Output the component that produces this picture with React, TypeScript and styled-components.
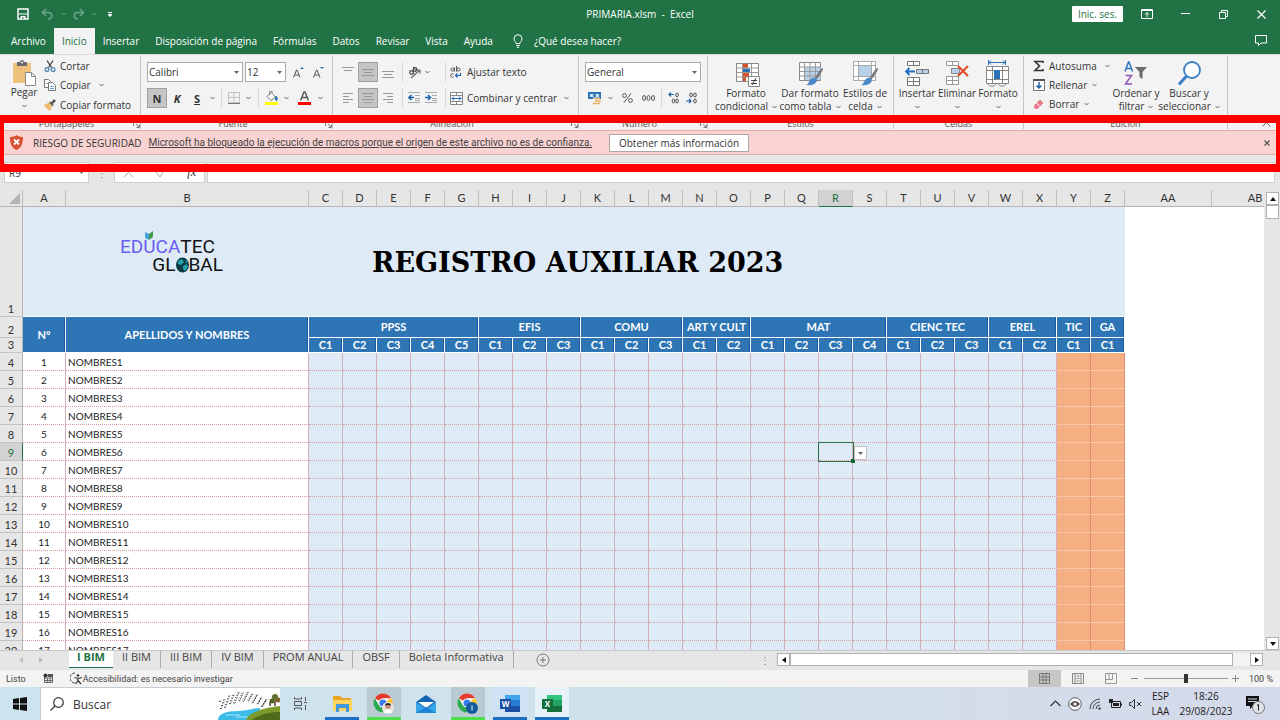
import React from "react";
import styled, { createGlobalStyle, css } from "styled-components";

const UI = `"Open Sans", "Noto Sans", sans-serif`;
const NARROW = `Roboto, "Open Sans", sans-serif`;
const CELL = `Lato, "Liberation Sans", sans-serif`;

const GlobalStyle = createGlobalStyle`
  * { box-sizing: border-box; }
  body { margin: 0; font-family: ${UI}; font-size: 10px; color: #333; }
  button, input, select { font: inherit; color: inherit; }
  button { border: 0; padding: 0; background: none; }
  svg { display: block; flex: none; }
`;

const Page = styled.div`
  display: flex;
  flex-direction: column;
  height: 100vh;
  min-height: 480px;
  overflow: hidden;
  background: #e6e6e6;
`;

/* ---------- title bar ---------- */
const TitleBar = styled.header`
  display: grid;
  grid-template-columns: 1fr auto 1fr;
  align-items: center;
  height: 28px;
  flex: none;
  background: #217346;
  color: #fff;
`;
const QuickAccess = styled.div`
  display: flex;
  align-items: center;
  padding-left: 14px;
`;
const WindowControls = styled.div`
  display: flex;
  justify-content: flex-end;
  align-items: center;
`;
const SignIn = styled.button`
  width: 51px;
  height: 16px;
  margin-right: 5px;
  background: #fff;
  color: #217346;
  border-radius: 1px;
`;
const ToolButton = styled.button<{ $w?: number; $on?: boolean }>`
  display: flex;
  align-items: center;
  justify-content: center;
  flex: none;
  width: ${(p) => p.$w ?? 20}px;
  height: 20px;
  ${(p) => p.$on && css`background: #c5c5c5; border: 1px solid #a0a0a0;`}
`;

/* ---------- ribbon tabs ---------- */
const RibbonTabs = styled.nav`
  display: flex;
  align-items: stretch;
  height: 26px;
  flex: none;
  padding: 0 8px 0 3px;
  background: #217346;
`;
const RibbonTab = styled.button<{ $active?: boolean }>`
  padding: 0 8px;
  color: ${(p) => (p.$active ? "#217346" : "#fff")};
  background: ${(p) => (p.$active ? "#f3f3f3" : "transparent")};
`;
const TellMe = styled.button`
  display: flex;
  align-items: center;
  gap: 11px;
  margin-left: 12px;
  color: #fff;
`;
const Comments = styled(ToolButton)`
  margin: 3px 0 0 auto;
`;

/* ---------- ribbon ---------- */
const Ribbon = styled.div`
  display: flex;
  height: 76px;
  flex: none;
  background: #f3f3f3;
  border-top: 1px solid #dcdcdc;
`;
const Group = styled.section<{ $w: number }>`
  display: flex;
  flex-direction: column;
  flex: none;
  width: ${(p) => p.$w}px;
  margin: 1px 0;
  border-right: 1px solid #c6c6c6;
`;
const GroupBody = styled.div<{ $pad?: number }>`
  display: flex;
  flex: 1;
  padding-left: ${(p) => p.$pad ?? 6}px;
`;
const GroupLabel = styled.div`
  display: flex;
  align-items: center;
  height: 10px;
  line-height: 10px;
  font-size: 9px;
  color: #555;
  span { flex: 1; text-align: center; }
`;
const Rows = styled.div`
  display: flex;
  flex-direction: column;
  gap: 6px;
  padding-top: 6px;
`;
const Row = styled.div`
  display: flex;
  align-items: center;
  height: 20px;
`;
const Cluster = styled.div`
  display: flex;
  width: 34px;
`;
const Sep = styled.i`
  width: 1px;
  height: 20px;
  margin: 0 4px;
  background: #d8d8d8;
`;
const Letter = styled.span<{ $italic?: boolean; $underline?: boolean }>`
  font-size: 11px;
  font-weight: 700;
  font-style: ${(p) => (p.$italic ? "italic" : "normal")};
  text-decoration: ${(p) => (p.$underline ? "underline" : "none")};
`;
const Stack = styled.div<{ $w?: number }>`
  display: flex;
  flex-direction: column;
  ${(p) => p.$w && `width: ${p.$w}px;`}
`;
const SmallButton = styled.button<{ $gap?: number }>`
  display: flex;
  align-items: center;
  gap: ${(p) => p.$gap ?? 4}px;
  height: 19px;
  white-space: nowrap;
`;
const BigButton = styled.button<{ $w: number }>`
  display: flex;
  flex-direction: column;
  align-items: center;
  justify-content: flex-start;
  width: ${(p) => p.$w}px;
  padding-top: 4px;
  line-height: 13px;
  white-space: nowrap;
`;
const LabelLine = styled.span`
  display: flex;
  align-items: center;
  justify-content: center;
  gap: 4px;
  min-height: 13px;
`;
const SelectBox = styled.label<{ $w: number }>`
  display: flex;
  align-items: center;
  width: ${(p) => p.$w}px;
  height: 20px;
  margin-right: 2px;
  padding-right: 3px;
  background: #fff;
  border: 1px solid #ababab;
  select {
    flex: 1;
    min-width: 0;
    padding: 0 1px;
    border: 0;
    background: none;
    appearance: none;
    outline: 0;
  }
`;
const Spacer = styled.div`
  flex: 1;
`;
const Collapse = styled.button`
  align-self: flex-end;
  margin: 0 9px 3px 0;
`;

/* ---------- security message ---------- */
const AlertWrap = styled.div`
  position: relative;
  flex: none;
`;
const Alert = styled.div`
  display: flex;
  align-items: center;
  height: 25px;
  padding: 0 7px 0 10px;
  background: #f8d3d2;
  border: solid #e8adab;
  border-width: 1px 0;
`;
const AlertTitle = styled.span`
  margin: 0 7px 0 10px;
`;
const AlertLink = styled.a`
  font-family: ${NARROW};
  color: #444;
  text-decoration: underline;
`;
const AlertButton = styled.button`
  width: 140px;
  height: 18px;
  margin-left: 17px;
  background: #fff;
  border: 1px solid #b0a6a6;
`;
const AlertClose = styled.button`
  margin-left: auto;
  padding: 3px;
`;
const Highlight = styled.div`
  position: absolute;
  inset: -15px 0 -17px;
  border: solid #f00;
  border-width: 8px 4px;
  pointer-events: none;
  z-index: 2;
`;

/* ---------- formula bar ---------- */
const FormulaBar = styled.div`
  display: flex;
  align-items: center;
  height: 35px;
  flex: none;
  padding: 0 5px 0 4px;
`;
const barBox = css`
  height: 21px;
  background: #fff;
  border: 1px solid #cfcfcf;
`;
const NameBox = styled.div`
  ${barBox}
  display: flex;
  align-items: center;
  width: 85px;
  padding-right: 4px;
  input { flex: 1; min-width: 0; padding: 0 4px; border: 0; background: none; }
`;
const FxBox = styled.div`
  ${barBox}
  display: flex;
  align-items: center;
  justify-content: space-between;
  width: 91px;
  margin-right: 2px;
  padding: 0 8px;
`;
const Fx = styled.span`
  font: italic 12px "Liberation Serif", serif;
`;
const Dots = styled.span`
  width: 25px;
  text-align: center;
  color: #888;
`;
const FormulaInput = styled.input`
  ${barBox}
  flex: 1;
  min-width: 0;
`;

/* ---------- sheet ---------- */
const SheetArea = styled.main`
  display: flex;
  flex: 1;
  min-height: 0;
`;
const GridView = styled.div`
  flex: 1;
  min-width: 0;
  overflow: hidden;
  background: linear-gradient(#e6e6e6 17px, #fff 17px);
`;
const Grid = styled.table`
  width: 100%;
  min-width: 1299px;
  table-layout: fixed;
  border-collapse: separate;
  border-spacing: 0;
  font-family: ${CELL};
  font-size: 10px;
  color: #222;
  th, td { padding: 0; overflow: hidden; white-space: nowrap; }
`;
const Col = styled.col<{ $w: number }>`
  width: ${(p) => p.$w}px;
`;
const ColHead = styled.th<{ $on?: boolean }>`
  height: 17px;
  font-weight: 400;
  font-size: 11px;
  line-height: 16px;
  background: ${(p) => (p.$on ? "#d2d2d2" : "#e6e6e6")};
  color: ${(p) => (p.$on ? "#217346" : "#333")};
  border-right: 1px solid #bdbdbd;
  border-bottom: 1px solid ${(p) => (p.$on ? "#217346" : "#b4b4b4")};
`;
const Corner = styled(ColHead)`
  svg { margin-left: 9px; }
`;
const RowHead = styled.th<{ $on?: boolean }>`
  font-weight: 400;
  font-size: 11px;
  line-height: 14px;
  vertical-align: bottom;
  background: ${(p) => (p.$on ? "#d2d2d2" : "#e6e6e6")};
  color: ${(p) => (p.$on ? "#217346" : "#333")};
  border-right: 1px solid ${(p) => (p.$on ? "#217346" : "#b4b4b4")};
  border-bottom: 1px solid #c4c4c4;
`;
const Banner = styled.td`
  height: 110px;
  background: #deeaf6;
  border-bottom: 1px solid #fff;
`;
const BannerContent = styled.div`
  display: flex;
  align-items: center;
  gap: 149px;
  padding-left: 97px;
`;
const SheetTitle = styled.h1`
  margin: 0;
  padding-top: 2px;
  font: 700 27px/30px "DejaVu Serif", serif;
  color: #000;
`;
const Logo = styled.div`
  position: relative;
  width: 103px;
  padding-top: 6px;
  margin-top: -18px;
  font: 19px/18px Roboto, "Liberation Sans", sans-serif;
  color: #111;
`;
const LogoLine = styled.div<{ $right?: boolean }>`
  display: flex;
  align-items: center;
  justify-content: ${(p) => (p.$right ? "flex-end" : "flex-start")};
  em { font-style: normal; color: #6a5cf0; }
`;
const LogoBook = styled.svg`
  position: absolute;
  left: 25px;
  top: -1px;
`;
const HeadCell = styled.th<{ $h: number }>`
  height: ${(p) => p.$h}px;
  font-size: 11px;
  line-height: 14px;
  font-weight: 700;
  color: #fff;
  background: #2e75b6;
  border-right: 1px solid #fff;
  border-bottom: 1px solid #fff;
  box-shadow: inset -1px 0 #1a5a9e;
`;
const Cell = styled.td<{ $tone?: "blue" | "orange" | "plain"; $center?: boolean }>`
  height: 18px;
  line-height: 16px;
  text-align: ${(p) => (p.$center ? "center" : "left")};
  background: ${(p) =>
    p.$tone === "blue" ? "#deeaf6" : p.$tone === "orange" ? "#f4b083" : "#fff"};
  border-right: 1px solid ${(p) => (p.$tone === "orange" ? "#dd8a68" : "#d3aebb")};
  border-bottom: 1px dotted ${(p) => (p.$tone === "orange" ? "#fbdcc8" : "#dc9aa0")};
`;
const NameCell = styled(Cell)`
  && { padding-left: 2px; }
`;
const Empty = styled.td`
  background: #fff;
`;
const ActiveCell = styled(Cell)`
  && { position: relative; overflow: visible; }
`;
const Cursor = styled.div`
  position: absolute;
  inset: -1px -2px -2px -1px;
  border: 1px solid #2f7049;
  &::after {
    content: "";
    position: absolute;
    right: -2px;
    bottom: -2px;
    width: 4px;
    height: 4px;
    background: #10662f;
  }
`;
const CellDrop = styled.button`
  position: absolute;
  left: 35px;
  top: 3px;
  width: 13px;
  height: 14px;
  display: flex;
  align-items: center;
  justify-content: center;
  background: #fff;
  border: 1px solid #c0c0c0;
  z-index: 1;
`;
const VScroll = styled.div`
  display: flex;
  flex-direction: column;
  justify-content: space-between;
  width: 16px;
  padding: 2px 2px 0;
`;
const ScrollBtn = styled.button`
  display: flex;
  align-items: center;
  justify-content: center;
  flex: none;
  width: 13px;
  height: 13px;
  background: #fff;
  border: 1px solid #b0b0b0;
`;
const VThumb = styled.div`
  height: 14px;
  width: 13px;
  background: #fff;
  border: 1px solid #b0b0b0;
`;

/* ---------- sheet tabs ---------- */
const SheetBar = styled.div`
  display: flex;
  height: 20px;
  flex: none;
  padding: 0 17px 2px 0;
  border-top: 1px solid #c8c8c8;
`;
const SheetNav = styled.div`
  display: flex;
  align-items: center;
  width: 69px;
  padding-left: 11px;
`;
const SheetTab = styled.button<{ $active?: boolean }>`
  height: 17px;
  padding: 0 ${(p) => (p.$active ? 8 : 9)}px 5px;
  font-size: 11px;
  line-height: 12px;
  color: #444;
  ${(p) =>
    p.$active
      ? css`color: #217346; font-weight: 700; background: #fff; border-bottom: 1px solid #217346;`
      : css`border-right: 1px solid #ababab;`}
`;
const AddSheet = styled.button`
  margin: 0 auto 0 22px;
`;
const HScroll = styled.div`
  display: flex;
  align-items: center;
  width: 41%;
  max-width: 511px;
`;
const HTrack = styled.div`
  flex: 1;
  height: 13px;
  padding-right: 17px;
  background: #f3f3f3;
`;
const HThumb = styled.div`
  height: 13px;
  background: #fff;
  border: 1px solid #b0b0b0;
`;

/* ---------- status bar ---------- */
const StatusBar = styled.footer`
  display: flex;
  align-items: center;
  height: 17px;
  flex: none;
  padding: 0 7px 0 6px;
  font-family: ${NARROW};
  font-size: 9px;
  background: #f3f3f3;
  color: #444;
`;
const StatusRight = styled.div`
  display: flex;
  align-items: center;
  margin-left: auto;
`;
const ViewButton = styled.button<{ $on?: boolean }>`
  display: flex;
  align-items: center;
  justify-content: center;
  width: 33px;
  height: 17px;
  background: ${(p) => (p.$on ? "#c6c6c6" : "transparent")};
`;
const ZoomSlider = styled.input`
  width: 84px;
  height: 10px;
  margin: 0 3px;
  appearance: none;
  background: linear-gradient(#999, #999) center / 100% 1px no-repeat;
  &::-webkit-slider-thumb {
    appearance: none;
    width: 4px;
    height: 9px;
    background: #333;
  }
`;
const ZoomLabel = styled.span`
  margin-left: 10px;
`;
const StatusIcon = styled.span`
  margin: 0 16px 0 17px;
`;

/* ---------- taskbar ---------- */
const Taskbar = styled.div`
  display: flex;
  height: 33px;
  flex: none;
  background: linear-gradient(90deg, #cde4ef, #cfe2ea 55%, #d4dcea 80%, #d3d9ea);
  color: #222;
`;
const StartButton = styled.button`
  display: flex;
  align-items: center;
  justify-content: center;
  width: 40px;
`;
const Search = styled.label`
  display: flex;
  align-items: center;
  width: 240px;
  padding-left: 9px;
  background: #fff;
  border: 1px solid #c5cdd2;
  border-width: 1px 0 0 1px;
  input {
    flex: 1;
    min-width: 0;
    padding: 0;
    margin-left: 9px;
    border: 0;
    background: none;
    font-size: 12px;
    outline: 0;
  }
  input::placeholder { color: #333; opacity: 1; }
`;
const TaskView = styled.button`
  display: flex;
  align-items: center;
  justify-content: center;
  width: 40px;
  margin-right: 5px;
`;
const TaskButton = styled.button<{ $tone?: string; $line?: string }>`
  display: flex;
  align-items: center;
  justify-content: center;
  width: 34px;
  margin-right: 8px;
  padding-top: 3px;
  background: ${(p) => p.$tone ?? "transparent"};
  border-bottom: 3px solid ${(p) => p.$line ?? "transparent"};
`;
const Tray = styled.div`
  display: flex;
  align-items: center;
  margin-left: auto;
  padding-right: 15px;
`;
const TrayButton = styled.button`
  display: flex;
  align-items: center;
  justify-content: center;
  width: 20px;
`;
const NotifyButton = styled(TrayButton)`
  margin-left: 9px;
`;
const TrayText = styled.div<{ $w: number }>`
  width: ${(p) => p.$w}px;
  line-height: 15px;
  text-align: center;
`;

/* ---------- drawings ---------- */
const Svg = ({ w, h = w, children }: { w: number; h?: number; children: React.ReactNode }) => (
  <svg width={w} height={h} viewBox={`0 0 ${w} ${h}`} fill="none" aria-hidden="true">
    {children}
  </svg>
);
const Chevron = ({ color = "#666" }) => (
  <Svg w={5} h={4}><path d="M.5 1l2 2 2-2" stroke={color} /></Svg>
);
const Tri = ({ dir = "down", color = "#555" }: { dir?: "up" | "down" | "left" | "right"; color?: string }) => {
  const d = { down: "M1 2h6L4 6z", up: "M1 6h6L4 2z", left: "M6 1v6L2 4z", right: "M2 1v6l4-3z" }[dir];
  return <Svg w={8}><path d={d} fill={color} /></Svg>;
};
const SmallTri = () => <Svg w={5} h={3}><path d="M0 0h5L2.500 3z" fill="#666" /></Svg>;
const Launcher = () => (
  <Svg w={7}><path d="M.5 5V.5H5M3 3l3 3M6.500 3.500v3h-3" stroke="#777" /></Svg>
);

const SaveIcon = () => (
  <Svg w={12}><path d="M1 1h10v10H1z" stroke="#fff" strokeWidth="1.500" /><path d="M2 5.500h8v1H2zM3.500 8h5v3h-5z" fill="#fff" /><path d="M5 9.500h1.500V11H5z" fill="#217346" /></Svg>
);
const UndoIcon = ({ flip = false }) => (
  <Svg w={13} h={12}><path transform={flip ? "translate(13 0) scale(-1 1)" : undefined} d="M5 1L1.500 4.500 5 8M1.500 4.500H8a3.300 3.300 0 0 1 0 6.500H7" stroke="#6aa386" strokeWidth="1.600" /></Svg>
);
const PasteIcon = () => (
  <Svg w={24} h={26}>
    <path d="M1 3h18v20H1z" fill="#eec27a" /><path d="M5 2h3a2 2 0 0 1 4 0h3v4H5z" fill="#6b6b6b" /><circle cx="10" cy="2.500" r="1" fill="#f3f3f3" />
    <path d="M13.500 12.500h6l4 4v9h-10z" fill="#fff" stroke="#888" /><path d="M19.500 12.500v4h4" stroke="#888" />
  </Svg>
);
const CutIcon = () => (
  <Svg w={12}><path d="M3 .5l4.500 7M9 .5L4.500 7.500" stroke="#444" strokeWidth="1.300" /><circle cx="3" cy="9.500" r="1.900" stroke="#4a7fb5" strokeWidth="1.200" /><circle cx="9" cy="9.500" r="1.900" stroke="#4a7fb5" strokeWidth="1.200" /></Svg>
);
const CopyIcon = () => (
  <Svg w={12}><path d="M.5.5h4l2 2v6h-6z" fill="#fff" stroke="#777" /><path d="M4.500 3.500h4l3 3v5h-7z" fill="#fff" stroke="#777" /><path d="M6 7.500h4M6 9.500h4M2 4.500h2" stroke="#6f9fcf" /></Svg>
);
const BrushIcon = () => (
  <Svg w={12}><path d="M0 6l5-2.500L8.500 7 6 12C3.500 11 1 8.500 0 6z" fill="#eebf73" /><path d="M5 3.500L8.500 7l1.200-1-1-1L12 2 10 0 7 3.500l-1-1z" fill="#555" /></Svg>
);
const BordersIcon = () => (
  <Svg w={12}><path d="M.5.5h11v10H.5zM6 .5v10M.5 5.500h11" stroke="#999" strokeDasharray="1 1" /><path d="M0 11.500h12" stroke="#777" /></Svg>
);
const BucketIcon = () => (
  <Svg w={13} h={14}><path d="M6 1.500L10.500 6 6 9.500 2 5.500z" fill="#fff" stroke="#777" /><path d="M4.500 4V1.500a1.500 1.500 0 0 1 3 0" stroke="#777" /><path d="M11 5c1.500 2 1.500 4 .5 4.500-1 0-1.500-1-.5-4.500z" fill="#2b6cb0" stroke="#2b6cb0" /><path d="M0 11h13v3H0z" fill="#ff0" /></Svg>
);
const FontColorIcon = () => (
  <Svg w={13} h={14}><path d="M2.500 9.500L6 1h1l3.500 8.500M4 6.500h5" stroke="#555" strokeWidth="1.400" /><path d="M0 11h13v3H0z" fill="#f00" /></Svg>
);
const GrowIcon = ({ down = false }) => (
  <Svg w={12} h={13}><path d="M1.500 11.500L4.500 4h.5l3 7.500M2.800 9h4" stroke="#555" /><path d={down ? "M8 1h4L10 3z" : "M8 3h4L10 1z"} fill="#2b6cb0" /></Svg>
);
const LinesIcon = ({ kind }: { kind: "top" | "middle" | "bottom" | "left" | "center" | "right" }) => {
  const d = {
    top: "M0 1.500h12M2 4.500h8",
    middle: "M0 3.500h12M2 6.500h8M0 9.500h12",
    bottom: "M0 5.500h12M2 8.500h8M0 11.500h12",
    left: "M1 1.500h10M1 4.500h6M1 7.500h10M1 10.500h6",
    center: "M0 1.500h12M2 4.500h8M0 7.500h12M2 10.500h8",
    right: "M1 1.500h10M5 4.500h6M1 7.500h10M5 10.500h6",
  }[kind];
  return <Svg w={12}><path d={d} stroke="#999" /></Svg>;
};
const OrientIcon = () => (
  <Svg w={13}><path d="M3 12L12 4M12 4v3.500M12 4H8.500" stroke="#666" strokeWidth="1.200" /><circle cx="3.500" cy="6.500" r="1.800" stroke="#444" strokeWidth="1.200" /><circle cx="7" cy="3.500" r="1.800" stroke="#444" strokeWidth="1.200" /><path d="M5 5l1 3M5 1l3.500 4" stroke="#444" /></Svg>
);
const IndentIcon = ({ right = false }) => (
  <Svg w={12}><path d="M0 .5h12M7 3.500h5M7 6.500h5M0 10.500h12M7 8.500h5" stroke="#aaa" /><path d={right ? "M0 5.500h5M3 3l2.500 2.500L3 8" : "M6 5.500H1M3.500 3L1 5.500 3.500 8"} stroke="#1f62ad" strokeWidth="1.600" /></Svg>
);
const WrapIcon = () => (
  <Svg w={12}><circle cx="2.500" cy="3.500" r="1.600" stroke="#555" /><path d="M4.500 1.500v4M6.500 0v5.500M3.500 8a1.800 1.800 0 1 0 0 3" stroke="#555" /><circle cx="8.500" cy="3.500" r="1.600" stroke="#555" /><path d="M10.500 7v2.500h-5M7.500 7.500L5.500 9.500l2 2" stroke="#1f62ad" strokeWidth="1.200" /></Svg>
);
const MergeIcon = () => (
  <Svg w={14} h={13}><path d="M.5.500h12v12H.5zM.5 3.500h12M.5 9.500h12M6.500.5v3M6.500 9.500v3" fill="#fff" stroke="#888" /><path d="M2 6.500h9M4 4.500l-2 2 2 2M9 4.500l2 2-2 2" stroke="#1f62ad" /></Svg>
);
const CurrencyIcon = () => (
  <Svg w={14} h={13}><path d="M0 0h13v7H0z" fill="#2a72b8" /><path d="M2 2h9v3H2z" fill="#cfe2f5" /><circle cx="6.500" cy="3.500" r="1.500" fill="#2a72b8" /><path d="M5 5.500h7v7H5z" fill="#f3f3f3" /><path d="M6 6.500h6M7 9h6M5 11.500h7" stroke="#e8b060" strokeWidth="1.500" /></Svg>
);
const PercentIcon = () => (
  <Svg w={11} h={10}><circle cx="2.500" cy="2.500" r="1.900" stroke="#555" /><circle cx="8.500" cy="7.500" r="1.900" stroke="#555" /><path d="M9 .5L2 9.500" stroke="#555" /></Svg>
);
const ThousandsIcon = () => (
  <Svg w={13} h={8}>{[2, 6.5, 11].map((x) => <ellipse key={x} cx={x} cy="4" rx="1.500" ry="2.500" stroke="#555" />)}</Svg>
);
const DecimalIcon = ({ less = false }) => (
  <Svg w={12}><ellipse cx="9" cy="3" rx="1.300" ry="2" stroke="#555" /><ellipse cx={less ? 5 : 9} cy={less ? 3 : 9} rx="1.300" ry="2" stroke="#555" /><ellipse cx={less ? 9 : 5.500} cy="9" rx="1.300" ry="2" stroke="#555" /><path d={less ? "M0 9h5M3 7l2 2-2 2" : "M6 2.500H1M3 .5l-2 2 2 2"} stroke="#1f62ad" strokeWidth="1.200" /></Svg>
);
const CondFormatIcon = () => (
  <Svg w={27}>
    <path d="M3.500 3.500h22v18h-22z" fill="#fff" stroke="#888" /><path d="M10 4h5v4h-5zM10 13h6v4h-6zM10 17h3v4h-3z" fill="#d9532c" /><path d="M10 8.500h7v4h-7z" fill="#2a72b8" />
    <path d="M3.500 8h22M3.500 12.500h22M3.500 17h22M9.500 3.500v18M18.500 3.500v18" stroke="#999" />
    <path d="M15.500 16.500h11v10h-11z" fill="#fff" stroke="#888" /><path d="M18 20.500h6M18 23.500h6M23 18l-4 7" stroke="#444" />
  </Svg>
);
const Brush = () => (
  <g><path d="M25.500 8c1 1 .5 2-5.500 11l-2-1.500C22 11 24.500 7.500 25.500 8z" fill="#777" /><path d="M18.500 18c2 1 2 3 0 5-2 2-6 2.500-9 2 2-1 2-3 3.500-5 1.500-2 4-3 5.500-2z" fill="#4b8ac9" /></g>
);
const TableFormatIcon = () => (
  <Svg w={27}><path d="M2.500 2.500h21v18h-21z" fill="#fff" stroke="#888" /><path d="M8 7h15.500v13H8z" fill="#b9d0ea" /><path d="M2.500 7h21M2.500 11.500h21M2.500 16h21M7.500 2.500v18M13 2.500v18M18.500 2.500v18" stroke="#999" /><Brush /></Svg>
);
const CellStyleIcon = () => (
  <Svg w={27}><path d="M1.500 1.500h22v19h-22zM1.500 5.500h22M1.500 16.500h22M6.500 1.500v19M19.500 1.500v19" fill="#fff" stroke="#aaa" /><path d="M7 6h12v10H7z" fill="#b9d0ea" /><Brush /></Svg>
);
const InsertIcon = () => (
  <Svg w={26} h={27}><path d="M3.500 1.500h12v4h-12zM9.500 1.500v4M3.500 17.500h12v8h-12zM3.500 21.500h12M9.500 17.500v8" fill="#fff" stroke="#777" /><path d="M12.500 9.500h12v4h-12z" fill="#b9d0ea" stroke="#777" /><path d="M18.500 9.500v4" stroke="#777" /><path d="M11 11.500H2M5.500 8L2 11.500 5.500 15" stroke="#1f6fbf" strokeWidth="1.800" /></Svg>
);
const DeleteIcon = () => (
  <Svg w={26} h={27}><path d="M2.500 1.500h12v4h-12zM8.500 1.500v4M2.500 16.500h12v8h-12zM2.500 20.500h12M8.500 16.500v8" fill="#fff" stroke="#999" /><path d="M7.500 8.500h8v5h-8z" fill="#b9d0ea" stroke="#888" /><path d="M14 6l10 10M24 6L14 16" stroke="#dc4b23" strokeWidth="2" /></Svg>
);
const FormatIcon = () => (
  <Svg w={26} h={27}><path d="M3 2.500h18M3.500 0v5M20.500 0v5M6 .5l-2 2 2 2M18 .5l2 2-2 2" stroke="#2a72b8" /><path d="M1.500 6.500h22v17h-22zM1.500 10.500h22M1.500 19.500h22M7.500 6.500v17M17.500 6.500v17" fill="#fff" stroke="#888" /><path d="M9 10h6v9H9z" fill="#2a72b8" /><path d="M3 24c2 3 6 3 8 0M13 24c2 3 6 3 8 0" stroke="#888" /></Svg>
);
const SigmaIcon = () => <Svg w={12}><path d="M10 3V1.500H2L6.500 6 2 10.500h8V9" stroke="#333" strokeWidth="1.600" /></Svg>;
const FillIcon = () => <Svg w={12}><path d="M.5.500h11v11H.5z" fill="#fff" stroke="#777" /><path d="M0 1h12" stroke="#555" strokeWidth="2" /><path d="M6 3v6M3.500 6.500L6 9l2.500-2.500" stroke="#1f62ad" strokeWidth="1.500" /></Svg>;
const EraserIcon = () => <Svg w={12}><path d="M1 7.500L7 1.500 10.500 5l-6 6H2.500L1 9.500z" fill="#e8798c" /><path d="M3.500 5l3.500 3.500" stroke="#fff" /></Svg>;
const SortIcon = () => (
  <Svg w={24} h={27}><path d="M1 11.500L4.500 2h.5L8.500 11.500M2.200 8.500h5" stroke="#2f75bd" strokeWidth="1.500" /><path d="M1.500 15.500h6l-6 8.500h6.500" stroke="#8e55b8" strokeWidth="1.500" /><path d="M11 7h12l-4.500 5v7l-3-2v-5z" fill="#6b6b6b" /></Svg>
);
const FindIcon = () => (
  <Svg w={25} h={27}><circle cx="15" cy="10" r="8" fill="#fff" stroke="#3c7fc4" strokeWidth="1.800" /><path d="M9.500 16L2 24.500" stroke="#3c7fc4" strokeWidth="3" /></Svg>
);
const ChromeIcon = ({ badge }: { badge: React.ReactNode }) => (
  <Svg w={22}>
    <circle cx="10" cy="10" r="9.500" fill="#fff" />
    <path d="M10 10L1.800 5.200A9.500 9.500 0 0 1 18.200 5.200H10z" fill="#e33b2e" />
    <path d="M10 10l8.200-4.800A9.500 9.500 0 0 1 10 19.500l4-7z" fill="#fcc31e" />
    <path d="M10 19.500A9.500 9.500 0 0 1 1.800 5.200L6 12.300l4 2.500z" fill="#2da94f" />
    <circle cx="10" cy="10" r="4.600" fill="#fff" /><circle cx="10" cy="10" r="3.600" fill="#3b7ded" />
    {badge}
  </Svg>
);
const AppDoc = ({ letter, dark, mid, light }: { letter: string; dark: string; mid: string; light: string }) => (
  <Svg w={20} h={19}>
    <path d="M5 1h15v5H5z" fill={light} /><path d="M5 6h15v6H5z" fill={mid} /><path d="M5 12h15v6H5z" fill={dark} />
    <path d="M0 5h11v10H0z" fill={dark} />
    <text x="5.500" y="13" textAnchor="middle" fontSize="8" fontWeight="700" fontFamily="Open Sans, sans-serif" fill="#fff">{letter}</text>
  </Svg>
);
const birds = Array.from({ length: 46 }, (_, i) => {
  const t = i / 45;
  return [1 + t * 46, 13 - Math.sin(t * 3) * 9 + ((i * 7) % 9) * 1.1];
});
const Scenery = () => (
  <Svg w={62} h={32}>
    {birds.map(([x, y], i) => <path key={i} d={`M${x.toFixed(1)} ${y.toFixed(1)}l1 .8 1-1.200`} stroke="#222" strokeWidth="0.900" />)}
    <path d="M0 32c0-6 8-9 20-9 10 0 16-3 22-3v12z" fill="#3cbbe8" /><path d="M8 27h14M18 29h14" stroke="#a9e6f7" />
    <path d="M28 32c2-5 6-7 12-9 6-3 14-4 22-5v14z" fill="#7d9b2c" /><path d="M34 32c6-5 16-8 28-8v8z" fill="#4d6b1b" />
    <path d="M57 18V9M52 18v-4" stroke="#5a3b1c" strokeWidth="1.500" /><circle cx="57" cy="9" r="3" fill="#5f7030" /><circle cx="60" cy="12" r="2.500" fill="#7c6234" /><circle cx="54" cy="13" r="2.500" fill="#4c6420" />
  </Svg>
);

type IconType = React.FC;
const Big = ({ w, icon: I, lines }: { w: number; icon: IconType; lines: [string, string] }) => (
  <BigButton $w={w}>
    <I />
    <LabelLine>{lines[0]}</LabelLine>
    <LabelLine>{lines[1]}<Chevron /></LabelLine>
  </BigButton>
);
const Drop = ({ w = 10 }) => <ToolButton $w={w} aria-label="Más opciones"><Chevron /></ToolButton>;
const GroupFooter = ({ text, launcher }: { text: string; launcher?: boolean }) => (
  <GroupLabel><span>{text}</span>{launcher && <Launcher />}</GroupLabel>
);

/* ---------- data ---------- */
const tabsAfter = ["Insertar", "Disposición de página", "Fórmulas", "Datos", "Revisar", "Vista", "Ayuda"];
const letters = "CDEFGHIJKLMNOPQRSTUVWXYZ".split("");
const subjects: [string, number][] = [
  ["PPSS", 5], ["EFIS", 3], ["COMU", 3], ["ART Y CULT", 2], ["MAT", 4],
  ["CIENC TEC", 3], ["EREL", 2], ["TIC", 1], ["GA", 1],
];
const criteria = subjects.flatMap(([, n]) => Array.from({ length: n }, (_, i) => `C${i + 1}`));
const students = Array.from({ length: 17 }, (_, i) => i + 1);
const sheets = ["II BIM", "III BIM", "IV BIM", "PROM ANUAL", "OBSF", "Boleta Informativa"];

export default function App() {
  return (
    <Page>
      <GlobalStyle />
      <TitleBar>
        <QuickAccess>
          <ToolButton $w={18} aria-label="Guardar"><SaveIcon /></ToolButton>
          <ToolButton $w={30} aria-label="Deshacer"><UndoIcon /></ToolButton>
          <ToolButton $w={2} aria-label="Opciones de deshacer"><Chevron color="#6aa386" /></ToolButton>
          <ToolButton $w={28} aria-label="Rehacer"><UndoIcon flip /></ToolButton>
          <ToolButton $w={4} aria-label="Opciones de rehacer"><Chevron color="#6aa386" /></ToolButton>
          <ToolButton $w={28} aria-label="Personalizar">
            <Svg w={4} h={5}><path d="M0 .5h4" stroke="#fff" /><path d="M0 2h4v1L2 5 0 3z" fill="#fff" /></Svg>
          </ToolButton>
        </QuickAccess>
        <span>PRIMARIA.xlsm&nbsp; - &nbsp;Excel</span>
        <WindowControls>
          <SignIn>Inic. ses.</SignIn>
          <ToolButton $w={38} aria-label="Opciones de la cinta"><Svg w={12} h={10}><path d="M.5.500h11v9H.5z" stroke="#fff" /><path d="M0 1.500h12M6 8V4M4 5.500l2-2 2 2" stroke="#fff" /></Svg></ToolButton>
          <ToolButton $w={38} aria-label="Minimizar"><Svg w={9} h={2}><path d="M0 .5h9" stroke="#fff" /></Svg></ToolButton>
          <ToolButton $w={38} aria-label="Restaurar"><Svg w={9}><path d="M.5 2.500h6v6h-6zM2.500 2.500v-2h6v6h-2" stroke="#fff" /></Svg></ToolButton>
          <ToolButton $w={38} aria-label="Cerrar"><Svg w={9}><path d="M.5.500l8 8M8.500.500l-8 8" stroke="#fff" strokeWidth="1.200" /></Svg></ToolButton>
        </WindowControls>
      </TitleBar>

      <RibbonTabs>
        <RibbonTab>Archivo</RibbonTab>
        <RibbonTab $active>Inicio</RibbonTab>
        {tabsAfter.map((t) => <RibbonTab key={t}>{t}</RibbonTab>)}
        <TellMe>
          <Svg w={10} h={14}><path d="M3 9.500C3 8 1 7 1 4.700a4 4 0 0 1 8 0C9 7 7 8 7 9.500zM3.200 11.500h3.600M3.800 13.300h2.400" stroke="#fff" /></Svg>
          ¿Qué desea hacer?
        </TellMe>
        <Comments $w={22} aria-label="Comentarios"><Svg w={12}><path d="M.5.500h11v7.500H6L3.500 10.500V8h-3z" stroke="#fff" /></Svg></Comments>
      </RibbonTabs>

      <Ribbon>
        <Group $w={141}>
          <GroupBody $pad={4}>
            <BigButton $w={40}><PasteIcon /><LabelLine>Pegar</LabelLine><LabelLine><Chevron /></LabelLine></BigButton>
            <Stack>
              <SmallButton><CutIcon />Cortar</SmallButton>
              <Row as="div"><SmallButton><CopyIcon />Copiar</SmallButton><Drop w={22} /></Row>
              <SmallButton><BrushIcon />Copiar formato</SmallButton>
            </Stack>
          </GroupBody>
          <GroupFooter text="Portapapeles" launcher />
        </Group>

        <Group $w={192}>
          <GroupBody>
            <Rows>
              <Row>
                <SelectBox $w={96}><select aria-label="Fuente"><option>Calibri</option></select><SmallTri /></SelectBox>
                <SelectBox $w={41}><select aria-label="Tamaño"><option>12</option></select><SmallTri /></SelectBox>
                <ToolButton aria-label="Aumentar fuente"><GrowIcon /></ToolButton>
                <ToolButton aria-label="Disminuir fuente"><GrowIcon down /></ToolButton>
              </Row>
              <Row>
                <ToolButton $on><Letter>N</Letter></ToolButton>
                <ToolButton><Letter $italic>K</Letter></ToolButton>
                <ToolButton><Letter $underline>S</Letter></ToolButton>
                <Drop /><Sep />
                <ToolButton $w={16} aria-label="Bordes"><BordersIcon /></ToolButton><Drop w={12} /><Sep />
                <ToolButton $w={16} aria-label="Relleno"><BucketIcon /></ToolButton><Drop w={14} />
                <ToolButton $w={22} aria-label="Color de fuente"><FontColorIcon /></ToolButton><Drop />
              </Row>
            </Rows>
          </GroupBody>
          <GroupFooter text="Fuente" launcher />
        </Group>

        <Group $w={246}>
          <GroupBody $pad={5}>
            <Rows>
              <Row>
                <ToolButton aria-label="Arriba"><LinesIcon kind="top" /></ToolButton>
                <ToolButton $on aria-label="Medio"><LinesIcon kind="middle" /></ToolButton>
                <ToolButton aria-label="Abajo"><LinesIcon kind="bottom" /></ToolButton>
                <Sep />
                <Cluster><ToolButton $w={14} aria-label="Orientación"><OrientIcon /></ToolButton><Drop w={12} /></Cluster>
                <Sep />
                <SmallButton $gap={5}><WrapIcon />Ajustar texto</SmallButton>
              </Row>
              <Row>
                <ToolButton aria-label="Izquierda"><LinesIcon kind="left" /></ToolButton>
                <ToolButton $on aria-label="Centro"><LinesIcon kind="center" /></ToolButton>
                <ToolButton aria-label="Derecha"><LinesIcon kind="right" /></ToolButton>
                <Sep />
                <Cluster><ToolButton $w={14} aria-label="Disminuir sangría"><IndentIcon /></ToolButton><ToolButton aria-label="Aumentar sangría"><IndentIcon right /></ToolButton></Cluster>
                <Sep />
                <SmallButton $gap={3}><MergeIcon />Combinar y centrar</SmallButton><Drop w={18} />
              </Row>
            </Rows>
          </GroupBody>
          <GroupFooter text="Alineación" launcher />
        </Group>

        <Group $w={129}>
          <GroupBody>
            <Rows>
              <Row><SelectBox $w={116}><select aria-label="Formato de número"><option>General</option></select><SmallTri /></SelectBox></Row>
              <Row>
                <ToolButton aria-label="Moneda"><CurrencyIcon /></ToolButton><Drop />
                <ToolButton $w={24} aria-label="Porcentaje"><PercentIcon /></ToolButton>
                <ToolButton $w={18} aria-label="Millares"><ThousandsIcon /></ToolButton><Sep />
                <ToolButton $w={16} aria-label="Más decimales"><DecimalIcon /></ToolButton>
                <ToolButton aria-label="Menos decimales"><DecimalIcon less /></ToolButton>
              </Row>
            </Rows>
          </GroupBody>
          <GroupFooter text="Número" launcher />
        </Group>

        <Group $w={186}>
          <GroupBody>
            <Big w={64} icon={CondFormatIcon} lines={["Formato", "condicional"]} />
            <Big w={64} icon={TableFormatIcon} lines={["Dar formato", "como tabla"]} />
            <Big w={46} icon={CellStyleIcon} lines={["Estilos de", "celda"]} />
          </GroupBody>
          <GroupFooter text="Estilos" />
        </Group>

        <Group $w={130}>
          <GroupBody $pad={3}>
            <Big w={40} icon={InsertIcon} lines={["Insertar", ""]} />
            <Big w={40} icon={DeleteIcon} lines={["Eliminar", ""]} />
            <Big w={42} icon={FormatIcon} lines={["Formato", ""]} />
          </GroupBody>
          <GroupFooter text="Celdas" />
        </Group>

        <Group $w={204}>
          <GroupBody $pad={9}>
            <Stack $w={79}>
              <SmallButton><SigmaIcon />Autosuma<Drop w={14} /></SmallButton>
              <SmallButton><FillIcon />Rellenar<Drop w={6} /></SmallButton>
              <SmallButton><EraserIcon />Borrar<Drop w={6} /></SmallButton>
            </Stack>
            <Big w={48} icon={SortIcon} lines={["Ordenar y", "filtrar"]} />
            <Big w={58} icon={FindIcon} lines={["Buscar y", "seleccionar"]} />
          </GroupBody>
          <GroupFooter text="Edición" />
        </Group>
        <Spacer />
        <Collapse aria-label="Contraer la cinta"><Svg w={9} h={5}><path d="M.5 4.500l4-4 4 4" stroke="#666" /></Svg></Collapse>
      </Ribbon>

      <AlertWrap>
        <Alert role="alert">
          <Svg w={13} h={15}><path d="M6.500 0C8 1.500 10.500 2 13 2c0 7-2 11-6.500 13C2 13 0 9 0 2c2.500 0 5-.5 6.500-2z" fill="#d8502d" /><path d="M4 4.500l5 5M9 4.500l-5 5" stroke="#fff" strokeWidth="1.800" /></Svg>
          <AlertTitle>RIESGO DE SEGURIDAD</AlertTitle>
          <AlertLink href="#macros">Microsoft ha bloqueado la ejecución de macros porque el origen de este archivo no es de confianza.</AlertLink>
          <AlertButton>Obtener más información</AlertButton>
          <AlertClose aria-label="Cerrar aviso"><Svg w={6}><path d="M.5.500l5 5M5.500.500l-5 5" stroke="#555" strokeWidth="1.200" /></Svg></AlertClose>
        </Alert>
        <Highlight />
      </AlertWrap>

      <FormulaBar>
        <NameBox><input aria-label="Cuadro de nombres" defaultValue="R9" /><SmallTri /></NameBox>
        <Dots>⋮</Dots>
        <FxBox>
          <Svg w={11}><path d="M1 1l9 9M10 1l-9 9" stroke="#aaa" /></Svg>
          <Svg w={11}><path d="M1 5l4 5 5-9" stroke="#aaa" /></Svg>
          <Fx>fx</Fx>
        </FxBox>
        <FormulaInput aria-label="Fórmula" />
      </FormulaBar>

      <SheetArea>
        <GridView>
          <Grid>
            <colgroup>
              <Col $w={23} /><Col $w={43} /><Col $w={243} />
              {letters.map((l) => <Col key={l} $w={34} />)}
              <Col $w={87} /><col />
            </colgroup>
            <thead>
              <tr>
                <Corner aria-label="Seleccionar todo"><Svg w={11}><path d="M11 0v11H0z" fill="#b4b4b4" /></Svg></Corner>
                {["A", "B", ...letters, "AA", "AB"].map((l) => <ColHead key={l} $on={l === "R"}>{l}</ColHead>)}
              </tr>
            </thead>
            <tbody>
              <tr>
                <RowHead>1</RowHead>
                <Banner colSpan={26}>
                  <BannerContent>
                    <Logo>
                      <LogoLine><em>EDUCA</em>TEC</LogoLine>
                      <LogoLine $right>
                        GL
                        <Svg w={13} h={16}><ellipse cx="6.500" cy="8" rx="6.500" ry="7.500" fill="#0b3a45" /><path d="M2 4l4-2 2 3-3 3-3-1zM7 9l4-2 1 3-3 4-2-2zM9 3l3 2-2 1z" fill="#23a3ae" /></Svg>
                        BAL
                      </LogoLine>
                      <LogoBook width="9" height="9" viewBox="0 0 9 9" aria-hidden="true"><path d="M0 1l4 2v6L0 7z" fill="#45a3dc" /><path d="M4 3l4-3v6L4 9z" fill="#3f9a4a" /></LogoBook>
                    </Logo>
                    <SheetTitle>REGISTRO AUXILIAR 2023</SheetTitle>
                  </BannerContent>
                </Banner>
                <Empty colSpan={2} />
              </tr>
              <tr>
                <RowHead>2</RowHead>
                <HeadCell $h={36} rowSpan={2}>Nº</HeadCell>
                <HeadCell $h={36} rowSpan={2}>APELLIDOS Y NOMBRES</HeadCell>
                {subjects.map(([s, n]) => <HeadCell key={s} $h={21} colSpan={n}>{s}</HeadCell>)}
                <Empty colSpan={2} />
              </tr>
              <tr>
                <RowHead>3</RowHead>
                {criteria.map((c, i) => <HeadCell key={i} $h={15}>{c}</HeadCell>)}
                <Empty colSpan={2} />
              </tr>
              {students.map((n) => (
                <tr key={n}>
                  <RowHead $on={n === 6}>{n + 3}</RowHead>
                  <Cell $center>{n}</Cell>
                  <NameCell>NOMBRES{n}</NameCell>
                  {letters.map((l) =>
                    n === 6 && l === "R" ? (
                      <ActiveCell key={l} $tone="blue"><Cursor /><CellDrop aria-label="Lista"><SmallTri /></CellDrop></ActiveCell>
                    ) : (
                      <Cell key={l} $tone={l === "Y" || l === "Z" ? "orange" : "blue"} />
                    ))}
                  <Empty colSpan={2} />
                </tr>
              ))}
            </tbody>
          </Grid>
        </GridView>
        <VScroll>
          <div>
            <ScrollBtn aria-label="Subir"><Tri dir="up" color="#111" /></ScrollBtn>
            <VThumb />
          </div>
          <ScrollBtn aria-label="Bajar"><Tri color="#111" /></ScrollBtn>
        </VScroll>
      </SheetArea>

      <SheetBar>
        <SheetNav>
          <ToolButton aria-label="Hoja anterior"><Tri dir="left" color="#bbb" /></ToolButton>
          <ToolButton aria-label="Hoja siguiente"><Tri dir="right" color="#bbb" /></ToolButton>
        </SheetNav>
        <SheetTab $active>I BIM</SheetTab>
        {sheets.map((s) => <SheetTab key={s}>{s}</SheetTab>)}
        <AddSheet aria-label="Hoja nueva"><Svg w={14}><circle cx="7" cy="7" r="6" stroke="#777" /><path d="M7 4v6M4 7h6" stroke="#777" /></Svg></AddSheet>
        <HScroll>
          <Dots>⋮</Dots>
          <ScrollBtn aria-label="Izquierda"><Tri dir="left" color="#111" /></ScrollBtn>
          <HTrack><HThumb /></HTrack>
          <ScrollBtn aria-label="Derecha"><Tri dir="right" color="#111" /></ScrollBtn>
        </HScroll>
      </SheetBar>

      <StatusBar>
        <span>Listo</span>
        <StatusIcon><Svg w={11}><path d="M1.500 2.500h8v7h-8zM1.500 5h8M1.500 7.500h8M4.500 5v4.500M7 5v4.500" stroke="#666" /><circle cx="2.500" cy="2.500" r="2" fill="#333" /><path d="M5 1h5v3H5z" fill="#555" /></Svg></StatusIcon>
        <Svg w={13}><path d="M5 1a5 5 0 0 0 0 10" stroke="#444" strokeDasharray="3 1" /><circle cx="8" cy="3.500" r="1.300" fill="#333" /><path d="M4.500 5.500L8 6.500l4-1M8 6v2.500L5.500 12M8 8.500l3 3.500" stroke="#333" strokeWidth="1.200" /></Svg>
        <span>Accesibilidad: es necesario investigar</span>
        <StatusRight>
          <ViewButton $on aria-label="Normal"><Svg w={11}><path d="M.5.500h10v10H.5zM.5 4h10M.5 7h10M4 .5v10M7 .5v10" stroke="#777" /></Svg></ViewButton>
          <ViewButton aria-label="Diseño de página"><Svg w={12} h={11}><path d="M.5.500h11v10H.5zM3 .5v10M9 .5v10M4.500 3h3M4.500 5.500h3M4.500 8h3" stroke="#888" /></Svg></ViewButton>
          <ViewButton aria-label="Saltos de página"><Svg w={12} h={11}><path d="M.5.500h11v10H.5zM.5 6.500h7v-6M4 .5v6" stroke="#999" /></Svg></ViewButton>
          <ToolButton $w={14} aria-label="Alejar"><Svg w={7}><path d="M0 3.500h7" stroke="#888" /></Svg></ToolButton>
          <ZoomSlider type="range" aria-label="Zoom" defaultValue={50} />
          <ToolButton $w={8} aria-label="Acercar"><Svg w={7}><path d="M0 3.500h7M3.500 0v7" stroke="#888" /></Svg></ToolButton>
          <ZoomLabel>100 %</ZoomLabel>
        </StatusRight>
      </StatusBar>

      <Taskbar>
        <StartButton aria-label="Inicio"><Svg w={14}><path d="M0 2l6-1v5.500H0zM7 1l7-1v6.500H7zM0 7.500h6V13l-6-1zM7 7.500h7V14l-7-1z" fill="#111" /></Svg></StartButton>
        <Search>
          <Svg w={14}><circle cx="8.500" cy="5.500" r="4.800" stroke="#333" strokeWidth="1.200" /><path d="M5 9L.5 13.500" stroke="#333" strokeWidth="1.200" /></Svg>
          <input aria-label="Buscar" placeholder="Buscar" />
          <Scenery />
        </Search>
        <TaskView aria-label="Vista de tareas"><Svg w={14} h={13}><path d="M1.500 4.500h7v4h-7zM1.500 0v2h7V0M1.500 13v-2h7v2M12.500 0v4M12.500 8v5M11 5.500h3" stroke="#555" /></Svg></TaskView>
        <TaskButton $line="#1b6fc2" aria-label="Explorador de archivos"><Svg w={19} h={17}><path d="M0 1h7l2 2h9v13H0z" fill="#eaa520" /><path d="M0 5h19v11H0z" fill="#fcd462" /><path d="M3 9h13v8h-3v-4H6v4H3z" fill="#3f97dc" /></Svg></TaskButton>
        <TaskButton $tone="#b9cad3" $line="#4be04b" aria-label="Chrome">
          <ChromeIcon badge={<g><circle cx="15" cy="15" r="6" fill="#e9e4e0" /><circle cx="15" cy="13.500" r="2.500" fill="#c68e6d" /><path d="M12 13c0-4 6-4 6 0-1-1.500-5-1.500-6 0z" fill="#222" /><path d="M11 20c1-5 7-5 8 0z" fill="#fff" /></g>} />
        </TaskButton>
        <TaskButton aria-label="Correo"><Svg w={20} h={18}><path d="M0 7l10-7 10 7v11H0z" fill="#1565b5" /><path d="M2 7h16l-8 6z" fill="#fff" /><path d="M0 7l10 7 10-7v11H0z" fill="#35a5ea" /><path d="M0 18l10-6 10 6z" fill="#1d83d4" /></Svg></TaskButton>
        <TaskButton $tone="#b9cad3" $line="#4be04b" aria-label="Chrome, perfil I">
          <ChromeIcon badge={<g><circle cx="15" cy="15" r="6" fill="#135a9c" /><path d="M15 12.500v5" stroke="#fff" /></g>} />
        </TaskButton>
        <TaskButton $tone="#cfe3f5" $line="#1b6fc2" aria-label="Word"><AppDoc letter="W" dark="#1a4fa3" mid="#2b7cd3" light="#41a5ee" /></TaskButton>
        <TaskButton $tone="#e6f2f8" $line="#1b6fc2" aria-label="Excel"><AppDoc letter="X" dark="#14703c" mid="#21a366" light="#33c481" /></TaskButton>
        <Tray>
          <TrayButton aria-label="Mostrar iconos ocultos"><Svg w={11} h={7}><path d="M.5 6l5-5 5 5" stroke="#333" strokeWidth="1.200" /></Svg></TrayButton>
          <TrayButton aria-label="Protección ocular"><Svg w={14}><circle cx="7" cy="7" r="6.300" fill="#fff" stroke="#555" /><path d="M2 7c3-4 7-4 10 0-3 4-7 4-10 0z" fill="#555" /><circle cx="7" cy="7" r="1.500" fill="#fff" /></Svg></TrayButton>
          <TrayButton aria-label="Wi-Fi"><Svg w={12}><path d="M1 11A10 10 0 0 1 11 1M4 11a7 7 0 0 1 7-7M7 11a4 4 0 0 1 4-4" stroke="#444" /><circle cx="10.500" cy="10.500" r="1.200" fill="#444" /></Svg></TrayButton>
          <TrayButton aria-label="Batería"><Svg w={13} h={10}><path d="M2.500 2.500h9v6h-9z" stroke="#222" /><path d="M4 4h6v3H4zM12 4.500h1v2h-1zM0 0h4v4H0z" fill="#222" /></Svg></TrayButton>
          <TrayButton aria-label="Silenciado"><Svg w={13} h={10}><path d="M.5 3.500h2l3-3v9l-3-3h-2zM8 3l4 4M12 3L8 7" stroke="#333" /></Svg></TrayButton>
          <TrayText $w={31}>ESP<br />LAA</TrayText>
          <TrayText $w={60}>18:26<br />29/08/2023</TrayText>
          <NotifyButton aria-label="Notificaciones"><Svg w={20}><path d="M1 2h13v10H8l-3 3v-3H1z" fill="#111" /><path d="M3 5h9M3 7.500h9" stroke="#d4dcea" /><circle cx="13.500" cy="13.500" r="6" fill="#dfe3e8" stroke="#777" /><path d="M12 11.500l1.500-1v6" stroke="#222" /></Svg></NotifyButton>
        </Tray>
      </Taskbar>
    </Page>
  );
}
